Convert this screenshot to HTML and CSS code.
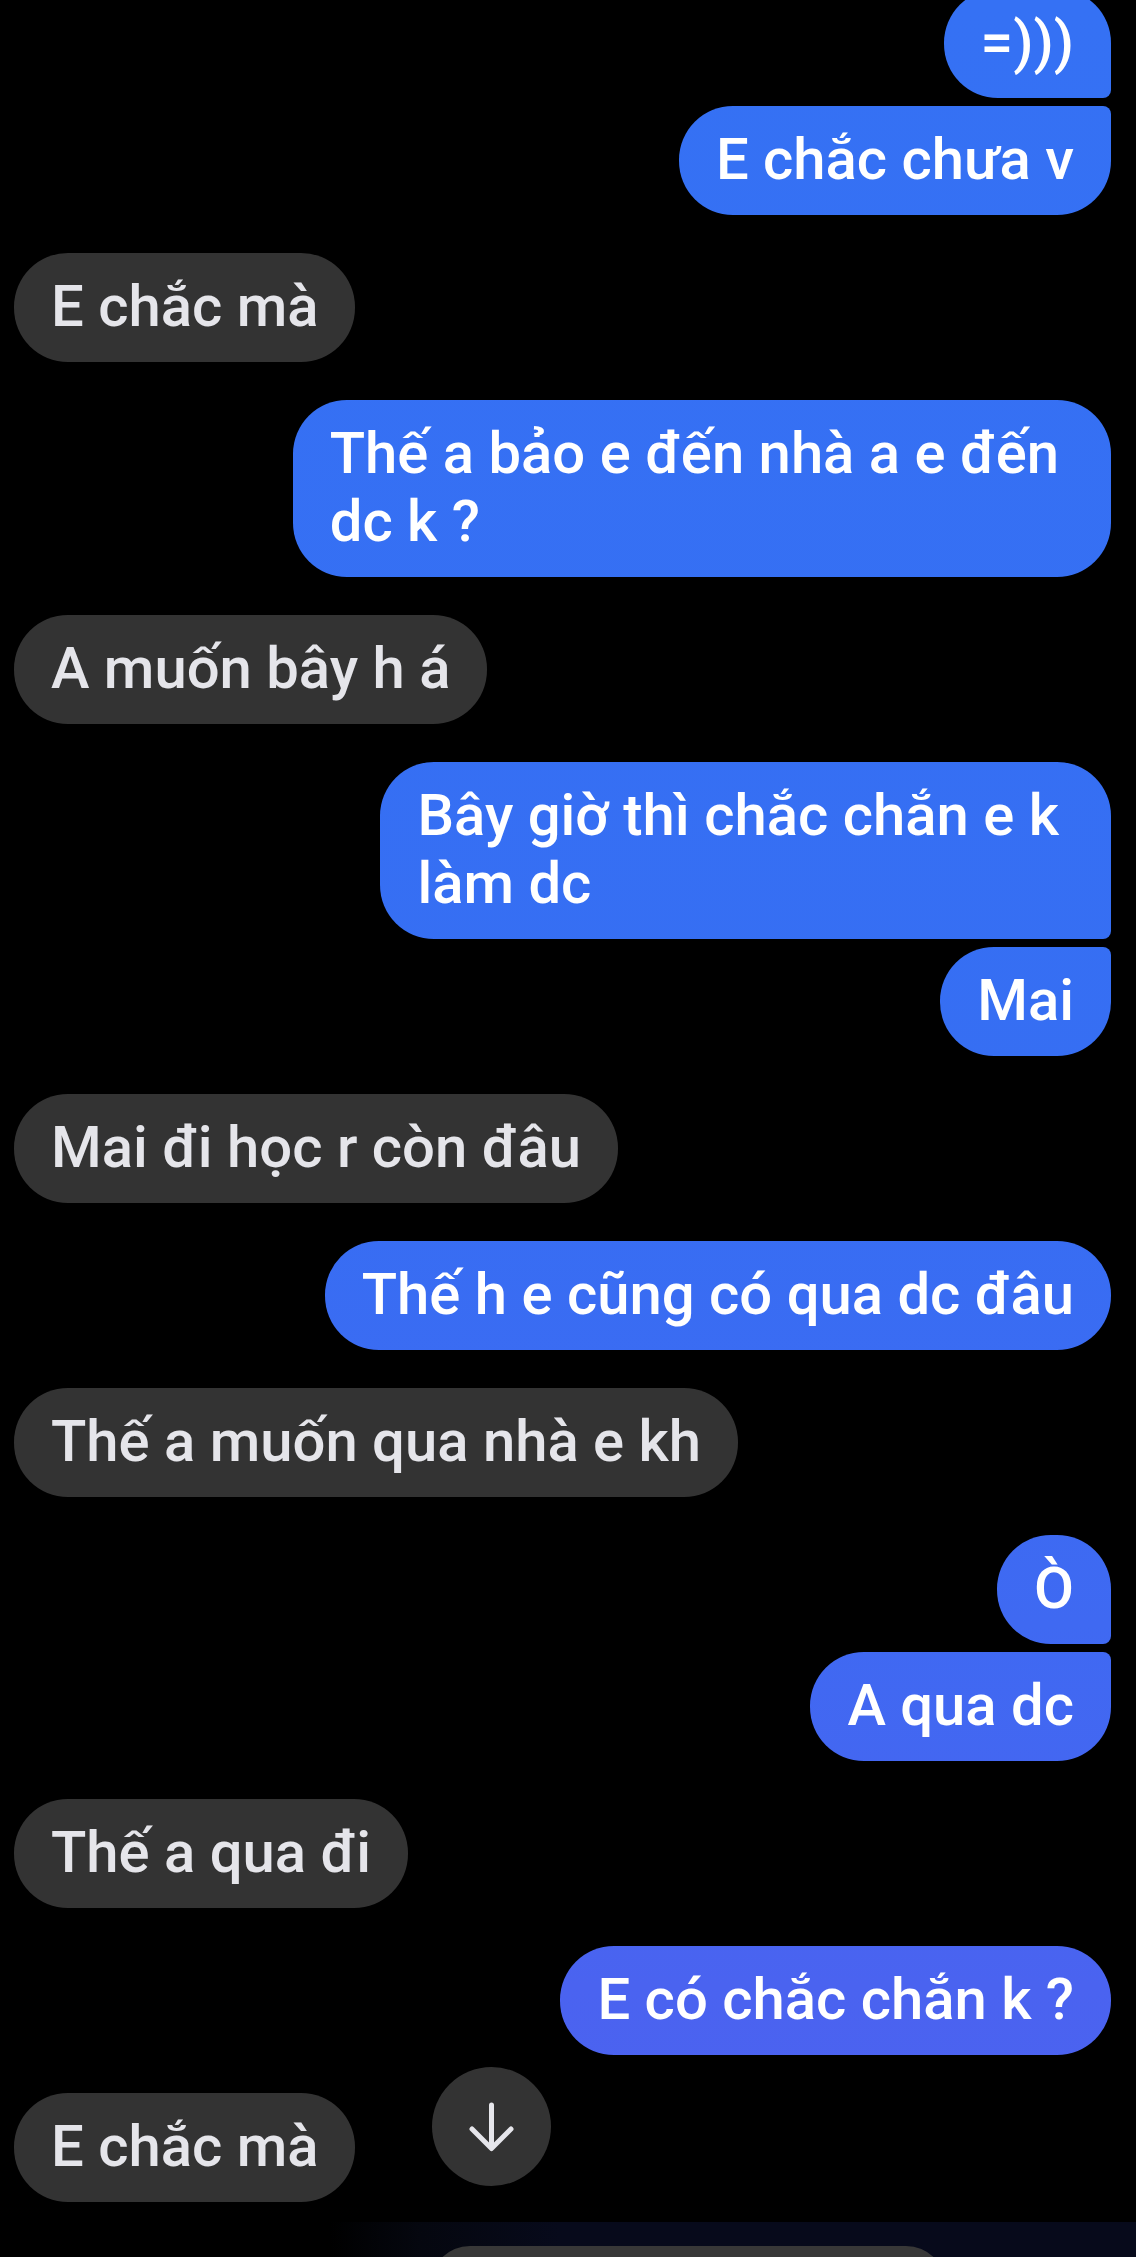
FILE: index.html
```html
<!DOCTYPE html>
<html lang="vi">
<head>
<meta charset="utf-8">
<title>Chat</title>
<link rel="stylesheet" href="styles.css">
</head>
<body>
<div class="screen">
  <main class="chat">
    <div class="msg out first top">=)))</div>
    <div class="msg out cont">E chắc chưa v</div>
    <div class="msg in">E chắc mà</div>
    <div class="msg out wrap">Thế a bảo e đến nhà a e đến<br>dc k ?</div>
    <div class="msg in">A muốn bây h á</div>
    <div class="msg out first wrap">Bây giờ thì chắc chắn e k<br>làm dc</div>
    <div class="msg out cont">Mai</div>
    <div class="msg in">Mai đi học r còn đâu</div>
    <div class="msg out">Thế h e cũng có qua dc đâu</div>
    <div class="msg in">Thế a muốn qua nhà e kh</div>
    <div class="msg out first">Ò</div>
    <div class="msg out cont">A qua dc</div>
    <div class="msg in">Thế a qua đi</div>
    <div class="msg out">E có chắc chắn k ?</div>
    <div class="msg in">E chắc mà</div>
  </main>
  <button class="scroll-down" aria-label="Cuộn xuống">
    <svg viewBox="0 0 119 119" width="119" height="119">
      <path d="M59.5 38 V81 M40 62 L59.5 81.5 L79 62" fill="none" stroke="#e6e6eb" stroke-width="5" stroke-linecap="round" stroke-linejoin="round"/>
    </svg>
  </button>
  <footer class="composer">
    <div class="composer-pill"></div>
  </footer>
</div>
</body>
</html>
```

FILE: styles.css
```css
html, body {
  margin: 0;
  padding: 0;
  background: #000;
  height: 2257px;
  overflow: hidden;
}

.screen {
  position: relative;
  height: 2257px;
  overflow: hidden;
}

.chat {
  display: flex;
  flex-direction: column;
  padding: 0 25px 0 14px;
  margin-top: -11px;
}

.msg {
  font-family: Roboto, "Liberation Sans", Arial, sans-serif;
  font-weight: 500;
  font-size: 58px;
  line-height: 68px;
  padding: 19px 37px 22px;
  border-radius: 54px;
  margin-top: 38px;
  white-space: nowrap;
}

.msg.wrap {
  padding-right: 52px;
}

.msg.top {
  margin-top: 0;
}

.msg.out {
  align-self: flex-end;
  color: #fff;
  background: linear-gradient(to bottom, #3571f4 0%, #366ef3 50%, #3f69f2 72%, #4a63f0 88%, #4d61ef 100%) fixed;
}

.msg.in {
  align-self: flex-start;
  color: #e5e5ea;
  background: #333333;
}

.msg.first {
  border-bottom-right-radius: 8px;
}

.msg.cont {
  margin-top: 8px;
  border-top-right-radius: 8px;
}

.scroll-down {
  position: absolute;
  top: 2067px;
  left: 432px;
  width: 119px;
  height: 119px;
  padding: 0;
  border: 0;
  border-radius: 50%;
  background: #333333;
  display: flex;
  align-items: center;
  justify-content: center;
}

.scroll-down svg {
  display: block;
}

.composer {
  margin-top: 20px;
  height: 35px;
  overflow: hidden;
  background: linear-gradient(to right, #000 0, #000 330px, #05070f 420px, #070a1b 560px, #070a1b 100%);
}

.composer-pill {
  margin: 24px 0 0 430px;
  width: 516px;
  height: 80px;
  border-radius: 40px;
  background: #383838;
}
```
